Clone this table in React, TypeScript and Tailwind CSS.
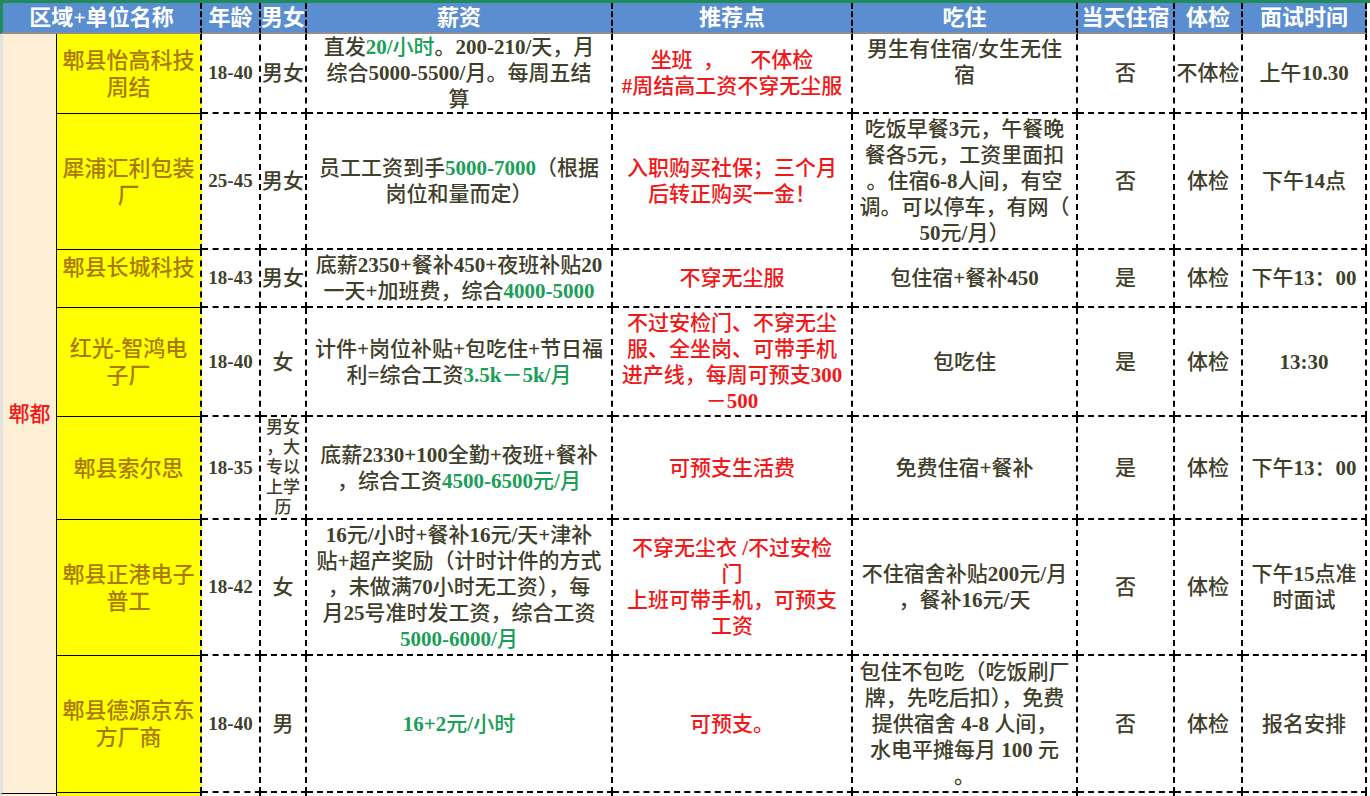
import React from "react";

type Row = {
  name: string[];
  nameTop?: boolean;
  age: string;
  sex: string[];
  sexSmall?: boolean;
  salary: string[];
  rec: string[];
  food: string[];
  foodTop?: boolean;
  stay: string;
  exam: string;
  time: string[];
};

const rows: Row[] = [
  {
    name: ["郫县怡高科技", "周结"],
    age: "18-40",
    sex: ["男女"],
    salary: ["直发{20/小时}。200-210/天，月", "综合5000-5500/月。每周五结", "算"],
    rec: ["坐班  ，     不体检", "#周结高工资不穿无尘服"],
    food: ["男生有住宿/女生无住", "宿"],
    foodTop: true,
    stay: "否",
    exam: "不体检",
    time: ["上午10.30"],
  },
  {
    name: ["犀浦汇利包装", "厂"],
    age: "25-45",
    sex: ["男女"],
    salary: ["员工工资到手{5000-7000}（根据", "岗位和量而定）"],
    rec: ["入职购买社保；三个月", "后转正购买一金！"],
    food: [
      "吃饭早餐3元，午餐晚",
      "餐各5元，工资里面扣",
      "。住宿6-8人间，有空",
      "调。可以停车，有网（",
      "50元/月）",
    ],
    stay: "否",
    exam: "体检",
    time: ["下午14点"],
  },
  {
    name: ["郫县长城科技"],
    nameTop: true,
    age: "18-43",
    sex: ["男女"],
    salary: ["底薪2350+餐补450+夜班补贴20", "一天+加班费，综合{4000-5000}"],
    rec: ["不穿无尘服"],
    food: ["包住宿+餐补450"],
    stay: "是",
    exam: "体检",
    time: ["下午13：00"],
  },
  {
    name: ["红光-智鸿电", "子厂"],
    age: "18-40",
    sex: ["女"],
    salary: ["计件+岗位补贴+包吃住+节日福", "利=综合工资{3.5k－5k/月}"],
    rec: ["不过安检门、不穿无尘", "服、全坐岗、可带手机", "进产线，每周可预支300", "－500"],
    food: ["包吃住"],
    stay: "是",
    exam: "体检",
    time: ["13:30"],
  },
  {
    name: ["郫县索尔思"],
    age: "18-35",
    sex: ["男女", "，大", "专以", "上学", "历"],
    sexSmall: true,
    salary: ["底薪2330+100全勤+夜班+餐补", "，综合工资{4500-6500元/月}"],
    rec: ["可预支生活费"],
    food: ["免费住宿+餐补"],
    stay: "是",
    exam: "体检",
    time: ["下午13：00"],
  },
  {
    name: ["郫县正港电子", "普工"],
    age: "18-42",
    sex: ["女"],
    salary: [
      "16元/小时+餐补16元/天+津补",
      "贴+超产奖励（计时计件的方式",
      "，未做满70小时无工资），每",
      "月25号准时发工资，综合工资",
      "{5000-6000/月}",
    ],
    rec: ["不穿无尘衣 /不过安检", "门", "上班可带手机，可预支", "工资"],
    food: ["不住宿舍补贴200元/月", "，餐补16元/天"],
    stay: "否",
    exam: "体检",
    time: ["下午15点准", "时面试"],
  },
  {
    name: ["郫县德源京东", "方厂商"],
    age: "18-40",
    sex: ["男"],
    salary: ["{16+2元/小时}"],
    rec: ["可预支。"],
    food: [
      "包住不包吃（吃饭刷厂",
      "牌，先吃后扣），免费",
      "提供宿舍 4-8 人间，",
      "水电平摊每月 100 元",
      "。",
    ],
    stay: "否",
    exam: "体检",
    time: ["报名安排"],
  },
];

const cell =
  "flex flex-col items-center justify-center text-center border-r-2 border-b-2 border-dashed border-black bg-white";

// latin runs (digits, + - /) are set heavier, like the sheet's font
function Latin({ text }: { text: string }) {
  const parts = text.split(/([\x21-\x7e]+)/);
  return (
    <>
      {parts.map((p, i) =>
        /^[\x21-\x7e]+$/.test(p) ? (
          <span key={i} className="font-bold">
            {p}
          </span>
        ) : (
          <span key={i}>{p}</span>
        )
      )}
    </>
  );
}

// "{...}" marks the green part of a line
function Rich({ text }: { text: string }) {
  const parts = text.split(/(\{[^}]*\})/);
  return (
    <>
      {parts.map((p, i) =>
        p.startsWith("{") ? (
          <span key={i} className="text-[#1a9e58]">
            <Latin text={p.slice(1, -1)} />
          </span>
        ) : (
          <Latin key={i} text={p} />
        )
      )}
    </>
  );
}

function Lines({ lines }: { lines: string[] }) {
  return (
    <>
      {lines.map((l, i) => (
        <div key={i} className="whitespace-pre">
          <Rich text={l} />
        </div>
      ))}
    </>
  );
}

export default function App() {
  const headers = ["年龄", "男女", "薪资", "推荐点", "吃住", "当天住宿", "体检", "面试时间"];

  return (
    <div className="h-[796px] w-[1370px] overflow-hidden bg-white [font-family:Liberation_Serif,Noto_Sans_CJK_SC,serif] text-[21px] font-medium leading-[26px] text-[#3f3f2c]">
      <div className="border-t-[3px] border-[#1f8a5a]">
        <div className="grid grid-cols-[57px_145px_59px_46px_306px_240px_225px_97px_68px_124px] grid-rows-[31px_80px_136px_58px_109px_103px_136px_137px_40px]">
          {/* Header */}
          <div className="col-span-2 flex items-center justify-center border-l-[3px] border-l-[#1f8a5a] border-r-2 border-r-black border-dashed border-b-2 border-b-[#8f8f8f] [border-left-style:solid] [border-bottom-style:solid] bg-[#5b8ed0] text-[22px] font-bold text-white">
            区域+单位名称
          </div>
          {headers.map((h) => (
            <div
              key={h}
              className="flex items-center justify-center border-r-2 border-r-black border-dashed border-b-2 border-b-[#8f8f8f] [border-bottom-style:solid] bg-[#5b8ed0] text-[22px] font-bold text-white whitespace-nowrap"
            >
              {h}
            </div>
          ))}

          {/* Region */}
          <div className="row-span-7 flex items-center justify-center border-l-[3px] border-l-[#e2e2e2] border-r border-r-black bg-[#fdefd6] text-[21px] text-[#f01818]">
            郫都
          </div>

          {rows.map((r, idx) => (
            <React.Fragment key={idx}>
              <div
                className={`flex flex-col items-center text-center border-r-2 border-r-black border-dashed border-b border-b-black [border-bottom-style:solid] bg-[#ffff00] text-[22px] leading-[27px] text-[#a97a05] ${
                  r.nameTop ? "justify-start pt-[4px]" : "justify-center"
                }`}
              >
                <Lines lines={r.name} />
              </div>
              <div className={`${cell} text-[19px]`}>
                <Lines lines={[r.age]} />
              </div>
              <div className={`${cell} ${r.sexSmall ? "text-[17px] leading-[20px]" : ""}`}>
                <Lines lines={r.sex} />
              </div>
              <div className={cell}>
                <Lines lines={r.salary} />
              </div>
              <div className={`${cell} text-[#f01818]`}>
                <Lines lines={r.rec} />
              </div>
              <div className={`${cell} ${r.foodTop ? "!justify-start pt-[2px]" : ""}`}>
                <Lines lines={r.food} />
              </div>
              <div className={cell}>{r.stay}</div>
              <div className={cell}>{r.exam}</div>
              <div className={cell}>
                <Lines lines={r.time} />
              </div>
            </React.Fragment>
          ))}

          {/* Next region, cut off by the window */}
          <div className="border-t border-t-black border-l-[3px] border-l-[#e2e2e2] border-r border-r-black bg-[#fdefd6]" />
          <div className="border-r-2 border-dashed border-black bg-[#ffff00]" />
          {Array.from({ length: 8 }).map((_, i) => (
            <div key={i} className="border-r-2 border-dashed border-black bg-white" />
          ))}
        </div>
      </div>
    </div>
  );
}
